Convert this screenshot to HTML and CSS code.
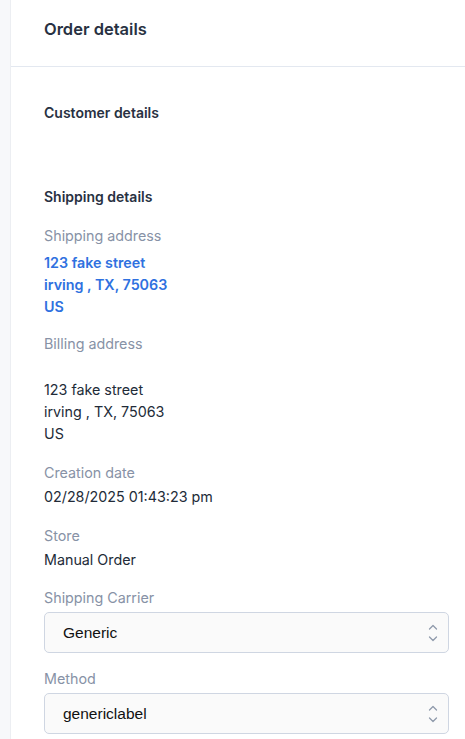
FILE: index.html
```html
<!DOCTYPE html>
<html>
<head>
<meta charset="utf-8">
<link rel="stylesheet" href="styles.css">
</head>
<body>
<div class="layout">
  <div class="rail"></div>
  <div class="panel">
    <div class="panel-header">
      <h1 class="title">Order details</h1>
    </div>
    <div class="panel-body">
      <h2 class="section-title customer">Customer details</h2>
      <h2 class="section-title shipping">Shipping details</h2>
      <div class="field tight">
        <div class="label">Shipping address</div>
        <div class="value multi link">123 fake street<br>irving , TX, 75063<br>US</div>
      </div>
      <div class="field">
        <div class="label">Billing address</div>
        <div class="value multi billing">123 fake street<br>irving , TX, 75063<br>US</div>
      </div>
      <div class="field loose">
        <div class="label">Creation date</div>
        <div class="value">02/28/2025 01:43:23 pm</div>
      </div>
      <div class="field">
        <div class="label">Store</div>
        <div class="value">Manual Order</div>
      </div>
      <div class="field tight">
        <div class="label">Shipping Carrier</div>
        <div class="select">
          <span>Generic</span>
          <svg class="chev" width="10" height="22" viewBox="0 0 10 22"><path d="M1.5 7 L5 3.5 L8.5 7" fill="none" stroke="#8f9aab" stroke-width="1.3" stroke-linecap="round" stroke-linejoin="round"/><path d="M1.5 15 L5 18.5 L8.5 15" fill="none" stroke="#8f9aab" stroke-width="1.3" stroke-linecap="round" stroke-linejoin="round"/></svg>
        </div>
      </div>
      <div class="field">
        <div class="label">Method</div>
        <div class="select">
          <span>genericlabel</span>
          <svg class="chev" width="10" height="22" viewBox="0 0 10 22"><path d="M1.5 7 L5 3.5 L8.5 7" fill="none" stroke="#8f9aab" stroke-width="1.3" stroke-linecap="round" stroke-linejoin="round"/><path d="M1.5 15 L5 18.5 L8.5 15" fill="none" stroke="#8f9aab" stroke-width="1.3" stroke-linecap="round" stroke-linejoin="round"/></svg>
        </div>
      </div>
    </div>
  </div>
</div>
</body>
</html>
```
FILE: styles.css
```css
* { box-sizing: border-box; }
html, body { margin: 0; padding: 0; background: #fff; }
body {
  font-family: Inter, "Noto Sans", sans-serif;
  color: #222b38;
  width: 465px;
  height: 739px;
  overflow: hidden;
}
.layout { display: flex; min-height: 739px; }
.rail {
  width: 11px;
  flex: none;
  background: #f7f8fa;
  border-right: 1px solid #eceef2;
}
.panel { flex: 1; }
.panel-header {
  height: 67px;
  border-bottom: 1px solid #e3e8f0;
  padding: 0 0 0 33px;
  display: flex;
  align-items: center;
}
.title {
  margin: 0 0 8px 0;
  font-size: 16.5px;
  font-weight: 600;
  color: #283142;
}
.panel-body { padding: 37px 16px 0 33px; }
.section-title {
  margin: 0;
  font-size: 14px;
  font-weight: 600;
  color: #283142;
  line-height: 18px;
}
.customer { margin-bottom: 66px; }
.shipping { margin-bottom: 20px; }
.field { margin-bottom: 18px; }
.field.tight { margin-bottom: 16px; }
.field.loose { margin-bottom: 19px; }
.label {
  font-size: 14.3px;
  color: #8792a6;
  line-height: 20px;
  margin-bottom: 4px;
}
.value {
  font-size: 14.3px;
  color: #222b38;
  line-height: 20px;
}
.value.multi { line-height: 22px; padding-top: 2px; }
.value.link { color: #2f71e0; font-weight: 600; }
.value.billing { margin-top: 25px; padding-top: 0; }
.select {
  height: 41px;
  border: 1px solid #cfd6e2;
  border-radius: 5px;
  background: #fafafa;
  display: flex;
  align-items: center;
  justify-content: space-between;
  padding: 0 10px 0 18px;
  font-family: "Liberation Sans", Arial, sans-serif;
  font-size: 15.5px;
  color: #111;
}
.chev { flex: none; }
```
